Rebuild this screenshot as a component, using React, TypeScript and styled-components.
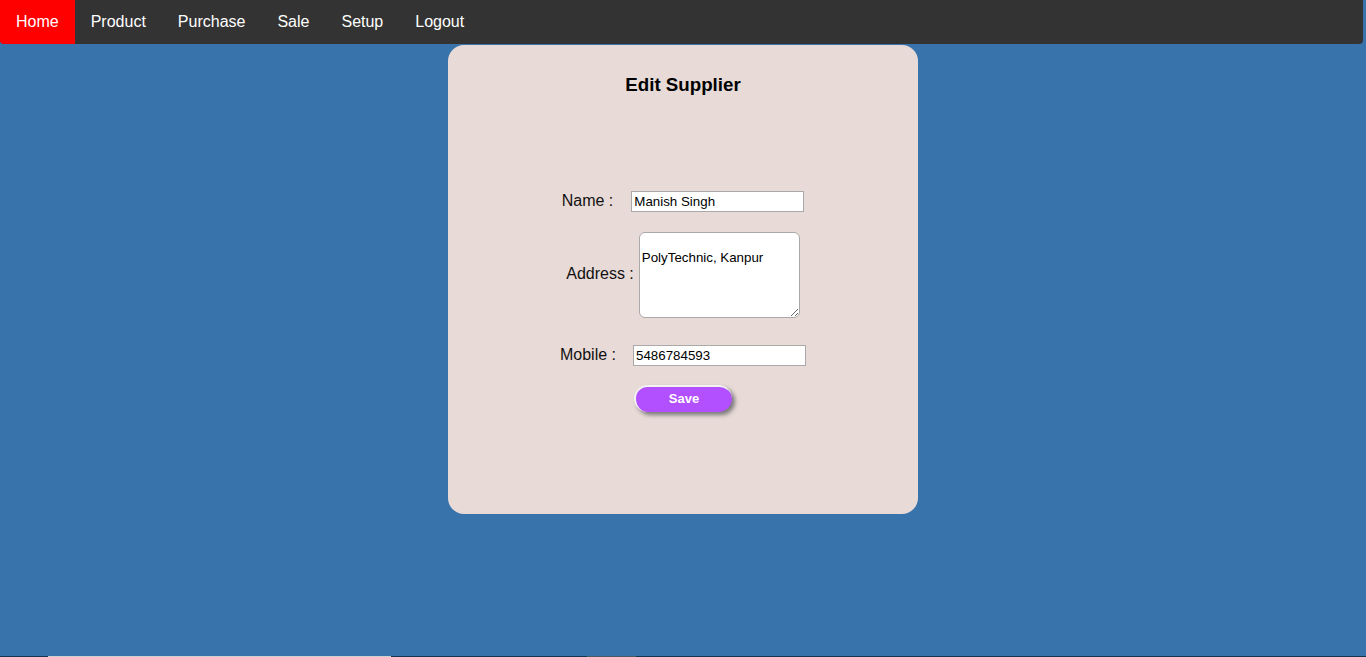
import React from "react";
import styled, { createGlobalStyle } from "styled-components";

const GlobalStyle = createGlobalStyle`
  html, body {
    margin: 0;
    padding: 0;
    background: #3873ab;
    font-family: "Liberation Sans", Arial, sans-serif;
  }
`;

const Page = styled.div`
  display: flex;
  flex-direction: column;
  min-height: 700px;
`;

const NavBar = styled.nav`
  display: flex;
  align-items: stretch;
  width: 1363px;
  height: 44px;
  background: #333333;
  border-radius: 0 0 4px 4px;
  overflow: hidden;
`;

const NavItem = styled.a<{ $active?: boolean }>`
  display: block;
  padding: 13px 16px;
  line-height: 18px;
  font-size: 16px;
  color: #ffffff;
  text-decoration: none;
  background: ${(p) => (p.$active ? "#ff0000" : "transparent")};
`;

const Main = styled.main`
  display: flex;
  justify-content: center;
  padding-top: 1px;
`;

const Card = styled.section`
  width: 470px;
  height: 469px;
  box-sizing: border-box;
  background: #e8dad6;
  border-radius: 16px;
  display: flex;
  flex-direction: column;
  align-items: center;
`;

const Title = styled.h3`
  margin: 29px 0 0;
  font-size: 18.72px;
  line-height: 22px;
  font-weight: bold;
  color: #000;
`;

const Row = styled.div<{ $top: number }>`
  display: flex;
  align-items: center;
  justify-content: center;
  margin-top: ${(p) => p.$top}px;
`;

const Label = styled.label<{ $gap: number }>`
  font-size: 16px;
  color: #111;
  padding-bottom: 2px;
  margin-right: ${(p) => p.$gap}px;
  white-space: nowrap;
`;

const TextInput = styled.input`
  box-sizing: border-box;
  width: 173px;
  height: 21px;
  padding: 1px 2px;
  border: 1px solid #a9a9a9;
  background: #fff;
  font-family: "Liberation Sans", Arial, sans-serif;
  font-size: 13.33px;
  color: #000;
  outline: none;
`;

const TextArea = styled.textarea`
  box-sizing: border-box;
  width: 161px;
  height: 86px;
  padding: 17px 2px 2px;
  border: 1px solid #a9a9a9;
  border-radius: 6px;
  background: #fff;
  font-family: "Liberation Sans", Arial, sans-serif;
  font-size: 13.33px;
  line-height: 15px;
  color: #000;
  outline: none;
`;

const SaveButton = styled.button`
  box-sizing: border-box;
  width: 98px;
  height: 27px;
  padding: 0 0 2px;
  border: none;
  border-top: 2px solid #f2f2f2;
  border-left: 2px solid #f2f2f2;
  border-radius: 14px;
  background: #b24fff;
  color: #fff;
  font-family: "Liberation Sans", Arial, sans-serif;
  font-weight: bold;
  font-size: 13px;
  box-shadow: 3px 3px 4px #7a7a7a;
  cursor: pointer;
`;

const Footer = styled.footer`
  margin-top: 142px;
  height: 40px;
  background: #16364f;
  display: flex;
`;

const FooterSeg = styled.div<{ $w: number; $c: string }>`
  width: ${(p) => p.$w}px;
  height: 100%;
  background: ${(p) => p.$c};
  flex: none;
`;

export default function App() {
  return (
    <Page>
      <GlobalStyle />
      <NavBar>
        <NavItem $active href="#">Home</NavItem>
        <NavItem href="#">Product</NavItem>
        <NavItem href="#">Purchase</NavItem>
        <NavItem href="#">Sale</NavItem>
        <NavItem href="#">Setup</NavItem>
        <NavItem href="#">Logout</NavItem>
      </NavBar>
      <Main>
        <Card>
          <Title>Edit Supplier</Title>
          <Row $top={95}>
            <Label $gap={18}>Name :</Label>
            <TextInput defaultValue="Manish Singh" />
          </Row>
          <Row $top={20}>
            <Label $gap={5}>Address :</Label>
            <TextArea defaultValue="PolyTechnic, Kanpur" />
          </Row>
          <Row $top={27}>
            <Label $gap={17}>Mobile :</Label>
            <TextInput defaultValue="5486784593" />
          </Row>
          <Row $top={19}>
            <SaveButton>Save</SaveButton>
          </Row>
        </Card>
      </Main>
      <Footer>
        <FooterSeg $w={48} $c="#16364f" />
        <FooterSeg $w={343} $c="#d0d0d0" />
        <FooterSeg $w={196} $c="#16364f" />
        <FooterSeg $w={49} $c="#4a5a66" />
      </Footer>
    </Page>
  );
}
